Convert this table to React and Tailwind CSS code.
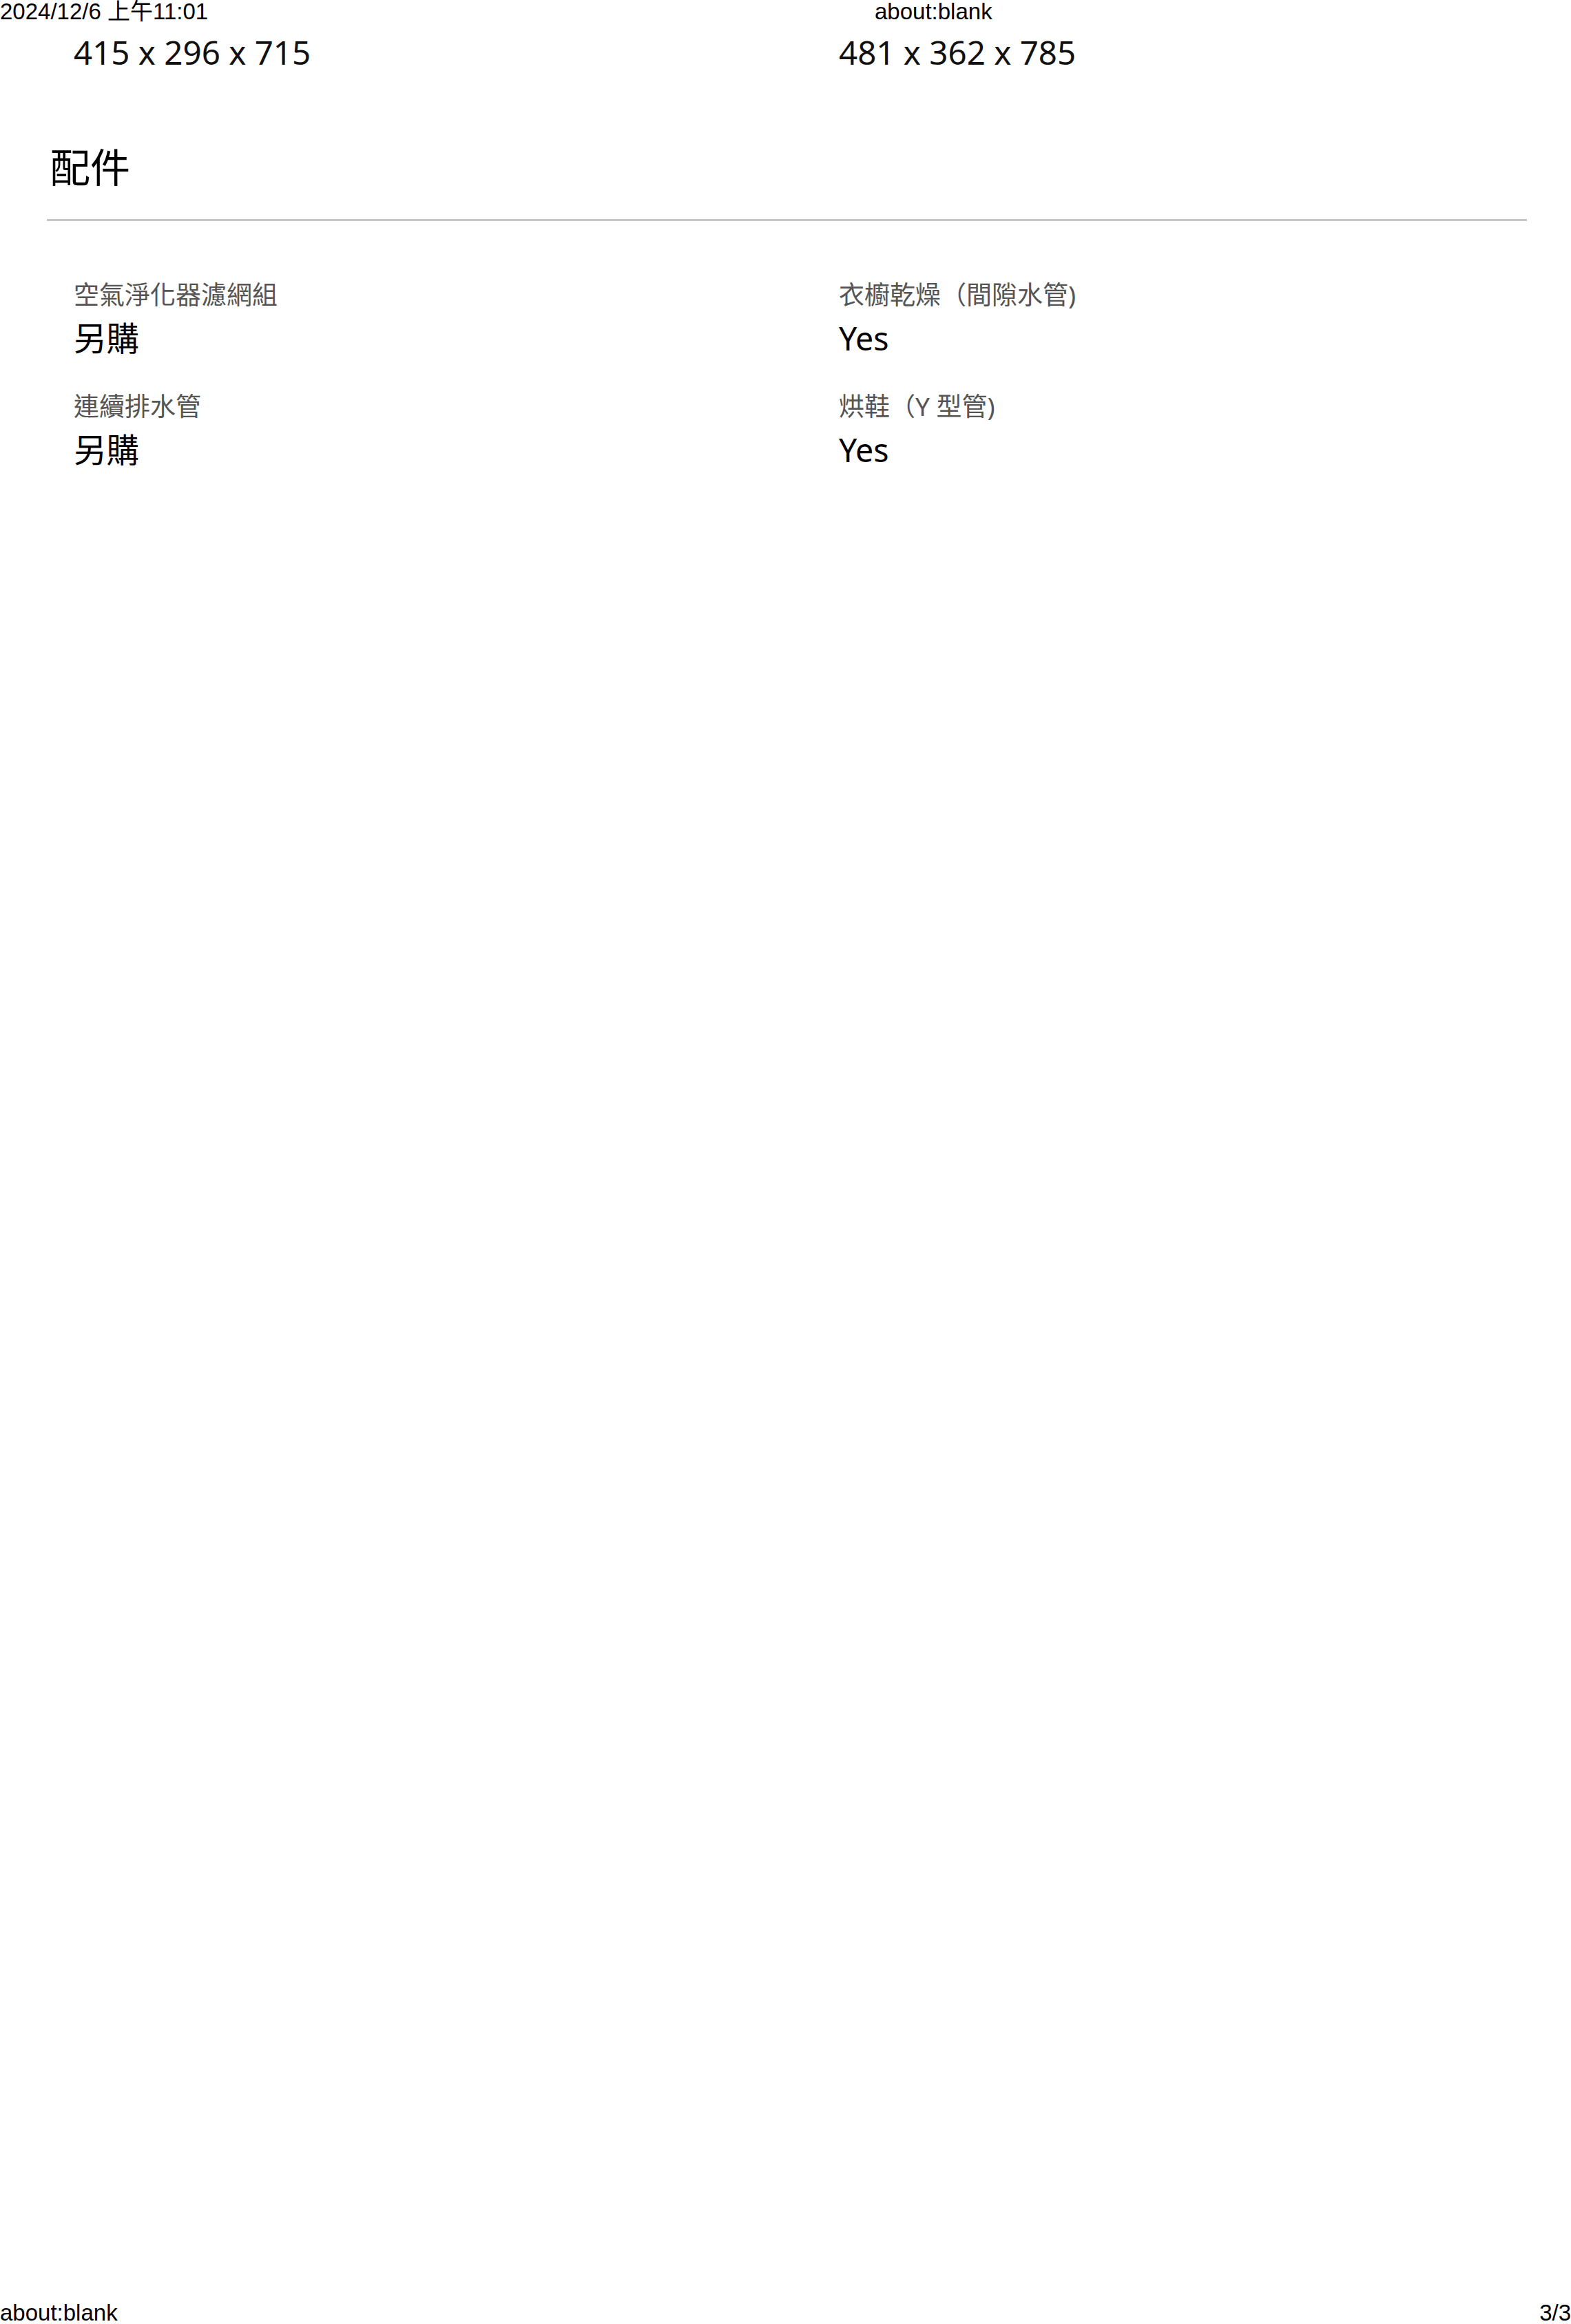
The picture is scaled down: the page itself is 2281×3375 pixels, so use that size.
export default function App() {
  const sans = "font-['Noto_Sans','Noto_Sans_CJK_TC',sans-serif]";
  const items = [
    ["空氣淨化器濾網組", "另購", "衣櫥乾燥（間隙水管)", "Yes"],
    ["連續排水管", "另購", "烘鞋（Y 型管)", "Yes"],
  ];
  return (
    <div className="w-[2281px] min-h-[3375px] bg-white flex flex-col text-black">
      <header className="flex h-[33px] font-['Liberation_Sans','Noto_Sans_CJK_TC',sans-serif] text-[33px] leading-[33px] text-black">
        <div className="w-[1270px]">2024/12/6 上午11:01</div>
        <div>about:blank</div>
      </header>

      <div className={`${sans} mt-[15px] grid grid-cols-[1111px_1fr] pl-[107px] text-[47.5px] leading-[56px] text-[#111]`}>
        <div>415 x 296 x 715</div>
        <div>481 x 362 x 785</div>
      </div>

      <section className={`${sans} mt-[101px] pl-[73px] pr-[64px]`}>
        <h2 className="text-[58px] leading-[70px] font-['Noto_Sans_CJK_TC','Noto_Sans',sans-serif] font-normal">配件</h2>
        <div className="mt-[43px] ml-[-5px] h-[3px] bg-[#c6c6c6]" />
        <div className="mt-[83px] pl-[34px] flex flex-col gap-[47px]">
          {items.map((row, i) => (
            <div key={i} className="grid grid-cols-[1111px_1fr]">
              <div className="flex flex-col gap-[11px]">
                <div className="text-[37px] leading-[48px] text-[#555555]">{row[0]}</div>
                <div className="text-[47.5px] leading-[56px] text-black">{row[1]}</div>
              </div>
              <div className="flex flex-col gap-[11px]">
                <div className="text-[37px] leading-[48px] text-[#555555]">{row[2]}</div>
                <div className="text-[46.5px] leading-[56px] text-black">{row[3]}</div>
              </div>
            </div>
          ))}
        </div>
      </section>

      <footer className="mt-auto flex justify-between h-[33px] font-['Liberation_Sans',sans-serif] text-[33px] leading-[33px] text-black">
        <div>about:blank</div>
        <div>3/3</div>
      </footer>
    </div>
  );
}
